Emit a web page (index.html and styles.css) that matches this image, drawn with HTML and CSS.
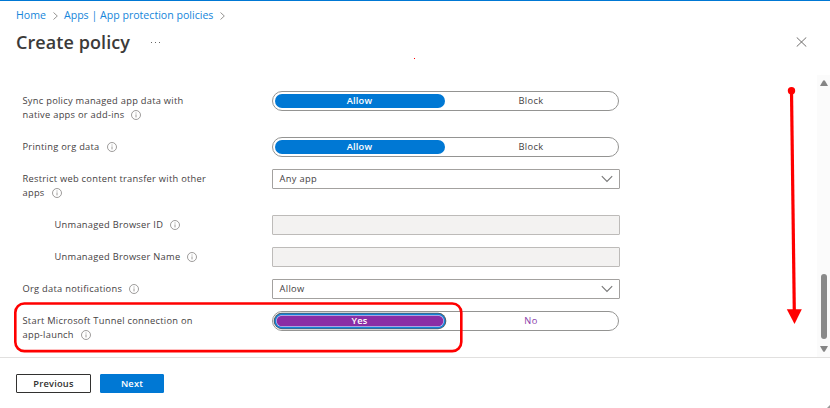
FILE: index.html
```html
<!DOCTYPE html>
<html lang="en">
<head>
<meta charset="utf-8">
<title>Create policy</title>
<link rel="stylesheet" href="styles.css">
</head>
<body>
<svg width="0" height="0" class="defs">
  <symbol id="info" viewBox="0 0 10 10"><circle cx="5" cy="5" r="4.5" fill="none" stroke="#858381" stroke-width=".8"/><path d="M5 4.4v3M5 2.5v1" stroke="#858381" stroke-width=".8"/></symbol>
  <symbol id="down" viewBox="0 0 12 8"><path d="M.8 1.2 6 6.4l5.2-5.2" fill="none" stroke="#777" stroke-width="1.1"/></symbol>
  <symbol id="next" viewBox="0 0 5 8"><path d="M.5.5 4.3 4 .5 7.5" fill="none" stroke="#8a8886" stroke-width=".9"/></symbol>
</svg>
<div class="page">
  <header class="header">
    <nav class="crumbs">
      <a>Home</a><svg class="sep"><use href="#next"/></svg><a>Apps | App protection policies</a><svg class="sep"><use href="#next"/></svg>
    </nav>
    <div class="title-row">
      <h1>Create policy</h1>
      <span class="more"><i></i><i></i><i></i></span>
      <svg class="close" viewBox="0 0 11 10"><path d="M.7.4l9.6 9.2M10.3.4.7 9.6" stroke="#605e5c" stroke-width=".9"/></svg>
    </div>
  </header>
  <main class="content">
    <div class="form">
      <div class="row"><label>Sync policy managed app data with<br>native apps or add-ins<svg class="info"><use href="#info"/></svg></label>
        <div class="toggle"><span class="on">Allow</span><span class="off">Block</span></div></div>
      <div class="row"><label>Printing org data<svg class="info"><use href="#info"/></svg></label>
        <div class="toggle"><span class="on">Allow</span><span class="off">Block</span></div></div>
      <div class="row"><label>Restrict web content transfer with other<br>apps<svg class="info"><use href="#info"/></svg></label>
        <div class="select">Any app<svg class="down"><use href="#down"/></svg></div></div>
      <div class="row sub"><label>Unmanaged Browser ID<svg class="info"><use href="#info"/></svg></label>
        <div class="select disabled"></div></div>
      <div class="row sub"><label>Unmanaged Browser Name<svg class="info"><use href="#info"/></svg></label>
        <div class="select disabled"></div></div>
      <div class="row"><label>Org data notifications<svg class="info"><use href="#info"/></svg></label>
        <div class="select">Allow<svg class="down"><use href="#down"/></svg></div></div>
      <div class="row"><label>Start Microsoft Tunnel connection on<br>app-launch<svg class="info"><use href="#info"/></svg></label>
        <div class="toggle focused"><span class="on">Yes</span><span class="off">No</span></div></div>
    </div>
    <div class="scrollbar">
      <svg class="arrow" viewBox="0 0 8 6"><path d="M0 6 3 .7Q4-.3 5 .7L8 6z" fill="#858585"/></svg>
      <div class="thumb"></div>
      <svg class="arrow" viewBox="0 0 8 6"><path d="M0 0 3 5.3Q4 6.3 5 5.3L8 0z" fill="#858585"/></svg>
    </div>
  </main>
  <footer class="footer">
    <button class="btn">Previous</button>
    <button class="btn primary">Next</button>
  </footer>
  <svg class="annotations" viewBox="0 0 830 408">
    <rect x="15.3" y="303.5" width="446" height="47.6" rx="9" fill="none" stroke="#f00" stroke-width="2.6"/>
    <path d="M791.5 91 794.3 311" stroke="#f00" stroke-width="3.2"/>
    <circle cx="791.5" cy="90.8" r="3.7" fill="#f00"/>
    <path d="M786.8 309.2h15L794.5 324z" fill="#f00"/>
    <rect x="414" y="58" width="1" height="1" fill="#f00"/>
    <path d="M830 405v3h-3z" fill="#999"/>
  </svg>
</div>
</body>
</html>
```

FILE: styles.css
```css
* { box-sizing: border-box; }
body { margin: 0; background: #fff; font-family: "Open Sans", "Noto Sans", sans-serif; color: #45413f; }
.defs { position: absolute; }
.page { position: relative; width: 830px; height: 408px; display: flex; flex-direction: column; overflow: hidden; border-top: 1px solid #0078d4; }
.header { height: 74px; padding: 7px 23px 0 16px; }
.crumbs { display: flex; align-items: center; height: 14px; font-size: 10.6px; line-height: 14px; color: #1585da; white-space: nowrap; }
.sep { width: 5px; height: 8px; margin: 1px 6px 0 7px; }
.title-row { display: flex; align-items: center; height: 26px; margin-top: 7px; }
h1 { margin: 0; font-size: 18px; line-height: 26px; font-weight: 600; letter-spacing: .08px; color: #3b3a39; white-space: nowrap; }
.more { display: flex; gap: 3px; margin-left: 21px; }
.more i { width: 1px; height: 1px; background: #666; }
.close { width: 11px; height: 10px; margin-left: auto; }
.content { height: 282px; display: flex; justify-content: space-between; }
.form { display: flex; flex-direction: column; gap: 12px; padding: 16px 0 0 22.5px; }
.row { display: grid; grid-template-columns: 249px 348px; align-items: start; }
.row label { padding: 3px 0; font-size: 9.3px; line-height: 14px; letter-spacing: .27px; white-space: nowrap; }
.row.sub label { padding-left: 32px; }
.info { width: 10px; height: 10px; margin-left: 7px; vertical-align: -1.5px; }
.toggle { width: 347px; height: 20px; border: 1px solid #949492; border-radius: 10px; padding: 2px; display: flex; font-size: 9.3px; line-height: 14px; letter-spacing: .15px; text-align: center; }
.on { width: 171px; height: 14px; border-radius: 7px; background: #0078d4; color: #fff; font-weight: 600; }
.off { width: 172px; padding-left: 2px; letter-spacing: .35px; }
.focused .on { background: #8a2da5; box-shadow: 0 0 0 .7px #b9c9f3 inset, 0 0 0 1.5px #1684d8, 0 0 0 2.3px #555; width: 169px; margin: 1px; height: 12px; line-height: 12px; }
.focused .off { color: #8a3ca9; }
.select { width: 348px; height: 20px; border: 1px solid #a3a19f; border-radius: 1px; padding: 0 6px 0 7px; display: flex; align-items: center; justify-content: space-between; font-size: 9.3px; line-height: 18px; letter-spacing: .35px; }
.select.disabled { background: #f3f2f1; border-color: #bdbbb9; }
.down { width: 12px; height: 8px; }
.scrollbar { width: 13px; display: flex; flex-direction: column; align-items: center; padding: 5px 0 5px; background: #fbfbfb; }
.arrow { width: 8px; height: 6px; }
.thumb { width: 6px; height: 65px; border-radius: 3px; background: #8a8a8a; margin: auto 0 7px; }
.footer { height: 51px; border-top: 1px solid #e1e0df; padding: 16px 16px 0; display: flex; gap: 9px; }
.btn { width: 75px; height: 19px; padding: 0; border: 1px solid #323130; border-radius: 1px; background: #fff; color: #323130; font: 600 9.3px/17px "Open Sans", "Noto Sans", sans-serif; letter-spacing: .2px; }
.btn.primary { width: 64px; border-color: #0078d4; background: #0078d4; color: #fff; }
.annotations { position: absolute; left: 0; top: -1px; width: 830px; height: 408px; pointer-events: none; }
```
